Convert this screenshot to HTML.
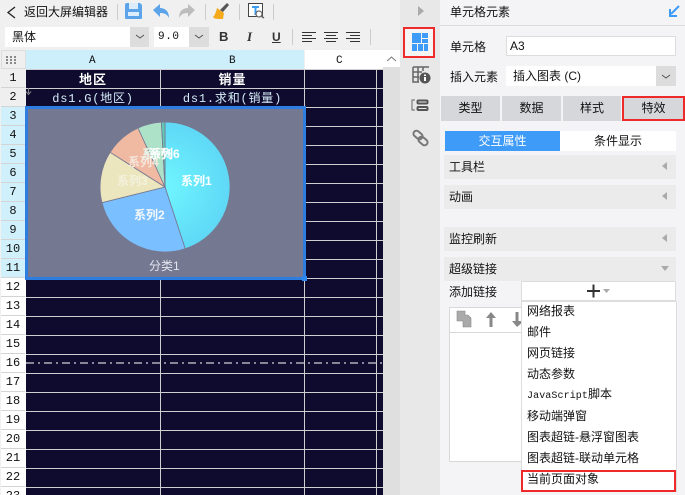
<!DOCTYPE html>
<html lang="zh"><head><meta charset="utf-8">
<style>
html{margin:0;padding:0;width:685px;height:495px;overflow:hidden}
body{margin:0;padding:0;width:685px;height:495px;overflow:hidden;position:relative;background:#f0f0f0;font:12px "Liberation Sans","WenQuanYi Zen Hei","Noto Sans CJK SC",sans-serif;color:#111}
.a{position:absolute}
.t{position:absolute;white-space:nowrap;line-height:16px}
.bar{position:absolute;left:444px;width:232px;height:24px;background:#ebebeb}
.bar span{position:absolute;left:5px;top:4px;line-height:16px}
.bar i{position:absolute;right:9px;top:7px;width:0;height:0;border:4px solid transparent;border-right:5px solid #aaa;border-left:0}
.tab{position:absolute;top:96px;height:25px;background:#d6d7db;text-align:center;line-height:25px;font-size:12px}
.rh{position:absolute;left:1px;width:24px;height:18px;text-align:center;line-height:18px;font-family:"Liberation Mono",monospace;font-size:12px;border-bottom:1px solid #d4d4d4}
.hl{position:absolute;left:26px;width:357px;height:1px;background:#cfcfcf}
.vl{position:absolute;top:69px;width:1px;height:426px;background:#cfcfcf}
.m{position:absolute;left:527px;white-space:nowrap;line-height:16px}
</style></head><body>

<!-- top toolbar -->
<svg class="a" style="left:0;top:0" width="400" height="50">
<path d="M15 7L8 12.500L15 18" fill="none" stroke="#222" stroke-width="1.300"/>
<line x1="117.500" y1="4" x2="117.500" y2="20" stroke="#ccc"/>
<path d="M127 3h13l2 2v13a1 1 0 0 1-1 1h-15a1 1 0 0 1-1-1V5a2 2 0 0 1 2-2z" fill="#5ba4ea"/>
<rect x="129" y="3" width="9" height="6" fill="#dcecfa"/><rect x="128" y="12" width="11" height="4" fill="#dcecfa"/>
<path d="M153 10l7-6v4c5 0 9 3 9 10-2-4-5-5-9-5v4z" fill="#5ba4ea"/>
<path d="M195 10l-7-6v4c-5 0-9 3-9 10 2-4 5-5 9-5v4z" fill="#bdbdbd"/>
<line x1="205.500" y1="4" x2="205.500" y2="20" stroke="#ccc"/>
<path d="M217 8l7 5-1 6c-4 0-8 0-9-1l-1-1c2-2 3-5 4-9z" fill="#f5aa1c"/>
<path d="M220 10l7-7 2 2-6 7z" fill="#555"/>
<line x1="239.500" y1="4" x2="239.500" y2="20" stroke="#ccc"/>
<rect x="248.500" y="3.500" width="14" height="13" fill="#fff" stroke="#444"/>
<path d="M252 6h7v2h-2.500v7h-2V8H252z" fill="#3b9cf0"/>
<circle cx="259" cy="14" r="3" fill="#fff" stroke="#666" stroke-width="1.200"/><line x1="261" y1="16" x2="264" y2="18" stroke="#666" stroke-width="1.500"/>
<line x1="273.500" y1="4" x2="273.500" y2="20" stroke="#ccc"/>
<line x1="292.500" y1="29" x2="292.500" y2="45" stroke="#ccc"/>
<line x1="370.500" y1="29" x2="370.500" y2="45" stroke="#ccc"/>
<g stroke="#333"><path d="M302 32.500h14M302 35.500h10M302 38.500h14M302 41.500h10"/><path d="M324 32.500h14M326 35.500h10M324 38.500h14M326 41.500h10"/><path d="M346 32.500h14M350 35.500h10M346 38.500h14M350 41.500h10"/></g>
</svg>
<div class="t" style="left:24px;top:4px;font-size:12px">返回大屏编辑器</div>
<div class="a" style="left:5px;top:27px;width:125px;height:20px;background:#fff"></div>
<div class="a" style="left:130px;top:27px;width:19px;height:20px;background:#ddd"></div>
<div class="t" style="left:12px;top:29px;font-size:12px">黑体</div>
<div class="a" style="left:154px;top:27px;width:35px;height:20px;background:#fff"></div>
<div class="a" style="left:189px;top:27px;width:20px;height:20px;background:#ddd"></div>
<div class="t" style="left:158px;top:29px;font-family:'Liberation Mono',monospace;font-size:11px;letter-spacing:.6px">9.0</div>
<svg class="a" style="left:0;top:25px" width="400" height="25"><path d="M136 10l4 3 4-3M195 10l4 3 4-3" fill="none" stroke="#555"/></svg>
<div class="t" style="left:219px;top:29px;font:bold 13px/16px 'Liberation Sans';color:#333">B</div>
<div class="t" style="left:247px;top:29px;font:italic bold 13px/16px 'Liberation Serif';color:#333">I</div>
<div class="t" style="left:272px;top:29px;font:bold 12px/16px 'Liberation Sans';color:#333;text-decoration:underline">U</div>

<!-- sheet -->
<div class="a" style="left:1px;top:50px;width:25px;height:445px;background:#fff"></div>
<div class="a" style="left:1px;top:50px;width:25px;height:19px;background:#efefef;border:1px solid #ddd;box-sizing:border-box"></div>
<svg class="a" style="left:5px;top:56px" width="16" height="9"><g fill="#888"><rect x="1" y="0" width="2" height="2"/><rect x="5" y="0" width="2" height="2"/><rect x="9" y="0" width="2" height="2"/><rect x="1" y="3" width="2" height="2"/><rect x="5" y="3" width="2" height="2"/><rect x="9" y="3" width="2" height="2"/><rect x="1" y="6" width="2" height="2"/><rect x="5" y="6" width="2" height="2"/><rect x="9" y="6" width="2" height="2"/></g></svg>
<div class="a" style="left:26px;top:50px;width:278px;height:19px;background:#cdeefb"></div>
<div class="a" style="left:305px;top:50px;width:78px;height:19px;background:#fff"></div>
<div class="a" style="left:26px;top:69px;width:357px;height:426px;background:#0f0b2e"></div>
<div class="a" style="left:383px;top:50px;width:17px;height:445px;background:#dfdfdf"></div>
<div class="a" style="left:383px;top:50px;width:17px;height:17px;background:#fff"></div>
<svg class="a" style="left:383px;top:50px" width="17" height="17"><path d="M4 11l4.500-4 4.500 4" fill="none" stroke="#777"/></svg>
<div class="t" style="left:89px;top:53px;font:11px/16px 'Liberation Mono',monospace;color:#111">A</div>
<div class="t" style="left:229px;top:53px;font:11px/16px 'Liberation Mono',monospace;color:#111">B</div>
<div class="t" style="left:336px;top:53px;font:11px/16px 'Liberation Mono',monospace;color:#111">C</div>

<div class="a" style="left:1px;top:69px;width:25px;height:38px;background:#efefef"></div>
<div class="a" style="left:1px;top:107px;width:25px;height:171px;background:#d0f1fc"></div>
<div class="rh" style="top:69px">1</div><div class="rh" style="top:88px">2</div><div class="rh" style="top:107px">3</div><div class="rh" style="top:126px">4</div><div class="rh" style="top:145px">5</div><div class="rh" style="top:164px">6</div><div class="rh" style="top:183px">7</div><div class="rh" style="top:202px">8</div><div class="rh" style="top:221px">9</div><div class="rh" style="top:240px">10</div><div class="rh" style="top:259px">11</div><div class="rh" style="top:278px">12</div><div class="rh" style="top:297px">13</div><div class="rh" style="top:316px">14</div><div class="rh" style="top:335px">15</div><div class="rh" style="top:354px">16</div><div class="rh" style="top:373px">17</div><div class="rh" style="top:392px">18</div><div class="rh" style="top:411px">19</div><div class="rh" style="top:430px">20</div><div class="rh" style="top:449px">21</div><div class="rh" style="top:468px">22</div><div class="rh" style="top:487px;height:8px;overflow:hidden;border-bottom:0">23</div>

<div class="vl" style="left:160px"></div><div class="vl" style="left:304px"></div><div class="vl" style="left:376px"></div>
<div class="hl" style="top:69px"></div><div class="hl" style="top:88px"></div>
<div class="hl" style="top:107px"></div><div class="hl" style="top:126px"></div><div class="hl" style="top:145px"></div><div class="hl" style="top:164px"></div><div class="hl" style="top:183px"></div><div class="hl" style="top:202px"></div><div class="hl" style="top:221px"></div><div class="hl" style="top:240px"></div><div class="hl" style="top:259px"></div>
<div class="hl" style="top:297px"></div><div class="hl" style="top:316px"></div><div class="hl" style="top:335px"></div><div class="hl" style="top:354px"></div><div class="hl" style="top:373px"></div><div class="hl" style="top:392px"></div><div class="hl" style="top:411px"></div><div class="hl" style="top:430px"></div><div class="hl" style="top:449px"></div><div class="hl" style="top:468px"></div><div class="hl" style="top:487px"></div>
<div class="hl" style="top:278px"></div>

<div class="t" style="left:26px;width:134px;text-align:center;top:72px;color:#fff;font-weight:bold;font-size:13px;letter-spacing:1px">地区</div>
<div class="t" style="left:161px;width:143px;text-align:center;top:72px;color:#fff;font-weight:bold;font-size:13px;letter-spacing:1px">销量</div>
<div class="t" style="left:26px;width:134px;text-align:center;top:91px;color:#d5ecf8;font-family:'Liberation Mono','WenQuanYi Zen Hei','Noto Sans CJK SC',monospace;font-size:12px;letter-spacing:.8px">ds1.G(地区)</div>
<div class="t" style="left:161px;width:143px;text-align:center;top:91px;color:#d5ecf8;font-family:'Liberation Mono','WenQuanYi Zen Hei','Noto Sans CJK SC',monospace;font-size:12px;letter-spacing:.8px">ds1.求和(销量)</div>
<svg class="a" style="left:25px;top:88px" width="8" height="8"><path d="M3.500 0v5M1 3.500l2.500 3 2.500-3" fill="none" stroke="#888"/></svg>

<svg class="a" style="left:26px;top:362px" width="357" height="2"><line x1="0" y1="1" x2="356" y2="1" stroke="#fff" stroke-width="1" stroke-dasharray="8 4 2 4"/></svg>

<!-- chart -->
<svg class="a" style="left:26px;top:107px" width="279" height="172">
<defs><radialGradient id="g1" gradientUnits="userSpaceOnUse" cx="139" cy="80" r="65"><stop offset="0" stop-color="#6ff6ff"/><stop offset="1" stop-color="#5fd8f6"/></radialGradient></defs>
<rect width="279" height="172" fill="#757891"/>
<g stroke="#757891" stroke-width=".8">
<path d="M139 80V15A65 65 0 0 1 159.200 141.800Z" fill="url(#g1)"/>
<path d="M139 80L159.200 141.800A65 65 0 0 1 76 95.700Z" fill="#7abfff"/>
<path d="M139 80L76 95.700A65 65 0 0 1 84.100 45.300Z" fill="#ece6bf"/>
<path d="M139 80L84.100 45.300A65 65 0 0 1 112 21Z" fill="#efb9a2"/>
<path d="M139 80L112 21A65 65 0 0 1 135.400 15.100Z" fill="#aee2c8"/>
<path d="M139 80L135.400 15.100A65 65 0 0 1 139 15Z" fill="#62c7b6"/>
</g>
<g fill="#f4f8fb" font-family="'Liberation Sans','WenQuanYi Zen Hei','Noto Sans CJK SC',sans-serif" font-size="12" font-weight="bold">
<text x="155" y="78" fill="#fff">系列1</text>
<text x="108" y="112">系列2</text>
<text x="91" y="78" fill="#f3f1dc">系列3</text>
<text x="102" y="59" fill="#f6e6dd">系列4</text>
<text x="116" y="51" fill="#e6f7ef">系列5</text>
<text x="123" y="51" fill="#fff">系列6</text>
<text x="123" y="163" font-weight="normal" fill="#e4e6ee">分类1</text>
</g>
</svg>
<div class="a" style="left:25px;top:106px;width:281px;height:174px;border:3px solid #2e7de0;box-sizing:border-box"></div>
<div class="a" style="left:302px;top:276px;width:5px;height:5px;background:#2e86f0"></div>

<!-- side strip -->
<div class="a" style="left:400px;top:0;width:40px;height:495px;background:#e8e8e8"></div>
<div class="a" style="left:440px;top:0;width:245px;height:495px;background:#f4f4f6"></div>
<div class="a" style="left:440px;top:25px;width:245px;height:1px;background:#dcdcdc"></div>
<svg class="a" style="left:400px;top:0" width="40" height="160">
<path d="M18 6l6 5-6 5z" fill="#aaa"/>
<rect x="4" y="28" width="30" height="29" fill="#f4f4f4" stroke="#ee2a2a" stroke-width="2"/>
<path d="M12 33h9v10h-9zM22 33h6v5h-6zM22 39h6v4h-6zM12 44h5v7h-5zM18 44h5v7h-5zM24 44h4v7h-4z" fill="#3f9bf8"/>
<g fill="none" stroke="#666" stroke-width="1.500"><path d="M13 67h16M13 67v15h6M13 72h9M13 77h6M18 67v15M23 67v4"/></g>
<circle cx="25" cy="78" r="5.500" fill="#555"/><rect x="24" y="77" width="2" height="4" fill="#fff"/><rect x="24" y="74.500" width="2" height="1.500" fill="#fff"/>
<path d="M15 100h-3v10h3" fill="none" stroke="#666"/><rect x="17.500" y="100.500" width="10" height="3" rx="1" fill="none" stroke="#555" stroke-width="2"/><rect x="17.500" y="107" width="10" height="3" rx="1" fill="none" stroke="#555" stroke-width="2"/>
<g fill="none" stroke="#777" stroke-width="2"><rect x="13" y="132" width="10" height="6" rx="3" transform="rotate(40 18 135)"/><rect x="18" y="138" width="10" height="6" rx="3" transform="rotate(40 23 141)"/></g>
</svg>

<!-- right panel -->
<div class="t" style="left:450px;top:4px">单元格元素</div>
<svg class="a" style="left:668px;top:4px" width="12" height="14"><path d="M11 2L3 10M2 5v7h7" fill="none" stroke="#3f9bf8" stroke-width="2"/></svg>
<div class="t" style="left:450px;top:39px">单元格</div>
<div class="a" style="left:506px;top:36px;width:170px;height:20px;background:#fff;border:1px solid #ddd;box-sizing:border-box"></div>
<div class="t" style="left:510px;top:38px">A3</div>
<div class="t" style="left:450px;top:69px">插入元素</div>
<div class="a" style="left:506px;top:66px;width:150px;height:20px;background:#fff"></div>
<div class="a" style="left:656px;top:66px;width:20px;height:20px;background:#dcdcdc"></div>
<svg class="a" style="left:656px;top:66px" width="20" height="20"><path d="M6 9l4 3 4-3" fill="none" stroke="#555"/></svg>
<div class="t" style="left:513px;top:68px">插入图表 (C)</div>
<div class="tab" style="left:441px;width:59px">类型</div>
<div class="tab" style="left:502px;width:59px">数据</div>
<div class="tab" style="left:563px;width:58px">样式</div>
<div class="tab" style="left:622px;width:63px;height:25px;border:2px solid #ee2a2a;box-sizing:border-box;line-height:21px;top:96px">特效</div>
<div class="a" style="left:445px;top:131px;width:115px;height:20px;background:#3f9bf8;color:#fff;text-align:center;line-height:20px">交互属性</div>
<div class="a" style="left:560px;top:131px;width:116px;height:20px;background:#fff;text-align:center;line-height:20px">条件显示</div>
<div class="bar" style="top:155px"><span>工具栏</span><i></i></div>
<div class="bar" style="top:185px"><span>动画</span><i></i></div>
<div class="bar" style="top:227px"><span>监控刷新</span><i></i></div>
<div class="bar" style="top:257px"><span>超级链接</span></div>
<svg class="a" style="left:660px;top:265px" width="12" height="8"><path d="M1 1h8L5 6z" fill="#aaa"/></svg>
<div class="t" style="left:449px;top:284px">添加链接</div>
<div class="a" style="left:521px;top:281px;width:155px;height:20px;background:#fff;border:1px solid #ddd;box-sizing:border-box"></div>
<svg class="a" style="left:585px;top:283px" width="30" height="16"><path d="M2 8h13M8.500 1.500v13" stroke="#333" stroke-width="2"/><path d="M18 6h7l-3.500 4z" fill="#aaa"/></svg>
<div class="a" style="left:449px;top:307px;width:80px;height:155px;background:#fff;border:1px solid #d8d8d8;box-sizing:border-box"></div>
<div class="a" style="left:449px;top:332px;width:80px;height:1px;background:#d8d8d8"></div>
<svg class="a" style="left:455px;top:310px" width="70" height="20">
<path d="M2 1h8v4h3l3 3v9H8v-6H2z" fill="#aaa" stroke="#888" stroke-width=".6"/>
<path d="M36 2l-5 6h3.500v9h3V8H41zM62 17l-5-6h3.500V2h3v9H69z" fill="#888"/>
</svg>
<div class="a" style="left:521px;top:301px;width:156px;height:191px;background:#fff;border:1px solid #ddd;box-sizing:border-box"></div>
<div class="m" style="top:303px">网络报表</div>
<div class="m" style="top:324px">邮件</div>
<div class="m" style="top:345px">网页链接</div>
<div class="m" style="top:366px">动态参数</div>
<div class="m" style="top:387px;font-family:'Liberation Mono','WenQuanYi Zen Hei','Noto Sans CJK SC',monospace;font-size:10px"><span style="letter-spacing:.1px">JavaScript</span><span style="font-size:12px">脚本</span></div>
<div class="m" style="top:408px">移动端弹窗</div>
<div class="m" style="top:429px">图表超链-悬浮窗图表</div>
<div class="m" style="top:450px">图表超链-联动单元格</div>
<div class="m" style="top:471px">当前页面对象</div>
<div class="a" style="left:521px;top:470px;width:155px;height:22px;border:2px solid #ee2a2a;box-sizing:border-box"></div>
</body></html>
